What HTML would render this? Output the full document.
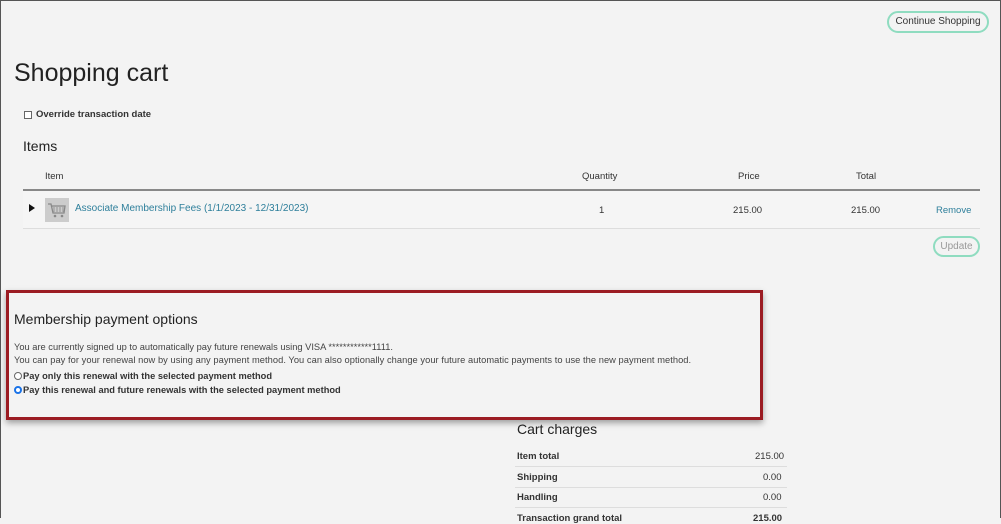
<!DOCTYPE html>
<html><head><meta charset="utf-8"><style>
*{margin:0;padding:0;box-sizing:border-box}
html,body{width:1001px;height:518px;overflow:hidden;background:#f3f3f3;font-family:"Liberation Sans",sans-serif;color:#222}
.frame{position:absolute;left:0;top:0;width:1001px;height:518px;border:1px solid #555;border-bottom:none}
.a{position:absolute;white-space:nowrap}
.btn{position:absolute;border:2px solid #8fdcc0;border-radius:12px;font-size:10px;color:#333;text-align:center;background:#f3f3f3}
.sm{font-size:9.5px;color:#333}
.b{font-weight:bold}
.link{color:#2e7f9b}
.hr{position:absolute;height:1px;background:#ddd}
</style></head><body>
<div class="frame"></div>
<div class="btn" style="left:887px;top:11px;width:102px;height:22px;line-height:18px">Continue Shopping</div>
<div class="a" style="left:14px;top:59px;font-size:25px;color:#222">Shopping cart</div>
<div class="a" style="left:24px;top:111px;width:8px;height:8px;border:1px solid #666;background:#fff"></div>
<div class="a sm b" style="left:36px;top:109px;font-size:9.5px">Override transaction date</div>
<div class="a" style="left:23px;top:138px;font-size:14px">Items</div>
<div class="a sm" style="left:45px;top:171px">Item</div>
<div class="a sm" style="left:582px;top:171px">Quantity</div>
<div class="a sm" style="left:738px;top:171px">Price</div>
<div class="a sm" style="left:856px;top:171px">Total</div>
<div class="hr" style="left:23px;top:189px;width:957px;height:2px;background:#888"></div>
<div class="a" style="left:23px;top:191px;width:957px;height:37px;background:#f5f5f5"></div>
<div class="a" style="left:29px;top:204px;width:0;height:0;border-left:6px solid #111;border-top:4px solid transparent;border-bottom:4px solid transparent"></div>
<div class="a" style="left:45px;top:198px;width:24px;height:24px;background:#ccc"><svg width="24" height="24" viewBox="0 0 24 24"><path d="M3 6h3l2 9h11l1-7H7" fill="none" stroke="#888" stroke-width="1.3"/><path d="M9 9v5M12 9v5M15 9v5M18 9v5" stroke="#888" stroke-width=".8"/><circle cx="10" cy="18" r="1.3" fill="#888"/><circle cx="17" cy="18" r="1.3" fill="#888"/></svg></div>
<div class="a link" style="left:75px;top:203px;font-size:10px">Associate Membership Fees (1/1/2023 - 12/31/2023)</div>
<div class="a sm" style="left:599px;top:205px">1</div>
<div class="a sm" style="left:733px;top:205px">215.00</div>
<div class="a sm" style="left:851px;top:205px">215.00</div>
<div class="a link" style="left:936px;top:205px;font-size:9.5px">Remove</div>
<div class="hr" style="left:23px;top:228px;width:957px"></div>
<div class="btn" style="left:933px;top:236px;width:47px;height:21px;line-height:17px;color:#999">Update</div>

<div class="a" style="left:6px;top:290px;width:757px;height:130px;border:3px solid #9b1b22;box-shadow:0 3px 6px rgba(0,0,0,.35);background:#f3f3f3"></div>
<div class="a" style="left:14px;top:311px;font-size:14px">Membership payment options</div>
<div class="a" style="left:14px;top:342px;font-size:9.3px;color:#444">You are currently signed up to automatically pay future renewals using VISA ************1111.</div>
<div class="a" style="left:14px;top:355px;font-size:9.3px;color:#444;letter-spacing:.05px">You can pay for your renewal now by using any payment method. You can also optionally change your future automatic payments to use the new payment method.</div>
<div class="a" style="left:14px;top:372px;width:8px;height:8px;border:1px solid #666;border-radius:50%;background:#fff"></div>
<div class="a b" style="left:23px;top:371px;font-size:9.3px;color:#333">Pay only this renewal with the selected payment method</div>
<div class="a" style="left:14px;top:386px;width:8px;height:8px;border:2.5px solid #1a73e8;border-radius:50%;background:#fff"></div>
<div class="a b" style="left:23px;top:385px;font-size:9.3px;color:#333">Pay this renewal and future renewals with the selected payment method</div>

<div class="a" style="left:517px;top:421px;font-size:14px">Cart charges</div>
<div class="a sm b" style="left:517px;top:451px;font-weight:bold">Item total</div>
<div class="a sm" style="left:755px;top:451px">215.00</div>
<div class="hr" style="left:515px;top:466px;width:272px"></div>
<div class="a sm b" style="left:517px;top:472px">Shipping</div>
<div class="a sm" style="left:763px;top:472px">0.00</div>
<div class="hr" style="left:515px;top:487px;width:272px"></div>
<div class="a sm b" style="left:517px;top:492px">Handling</div>
<div class="a sm" style="left:763px;top:492px">0.00</div>
<div class="hr" style="left:515px;top:507px;width:272px"></div>
<div class="a sm b" style="left:517px;top:513px">Transaction grand total</div>
<div class="a sm b" style="left:753px;top:513px">215.00</div>
</body></html>
